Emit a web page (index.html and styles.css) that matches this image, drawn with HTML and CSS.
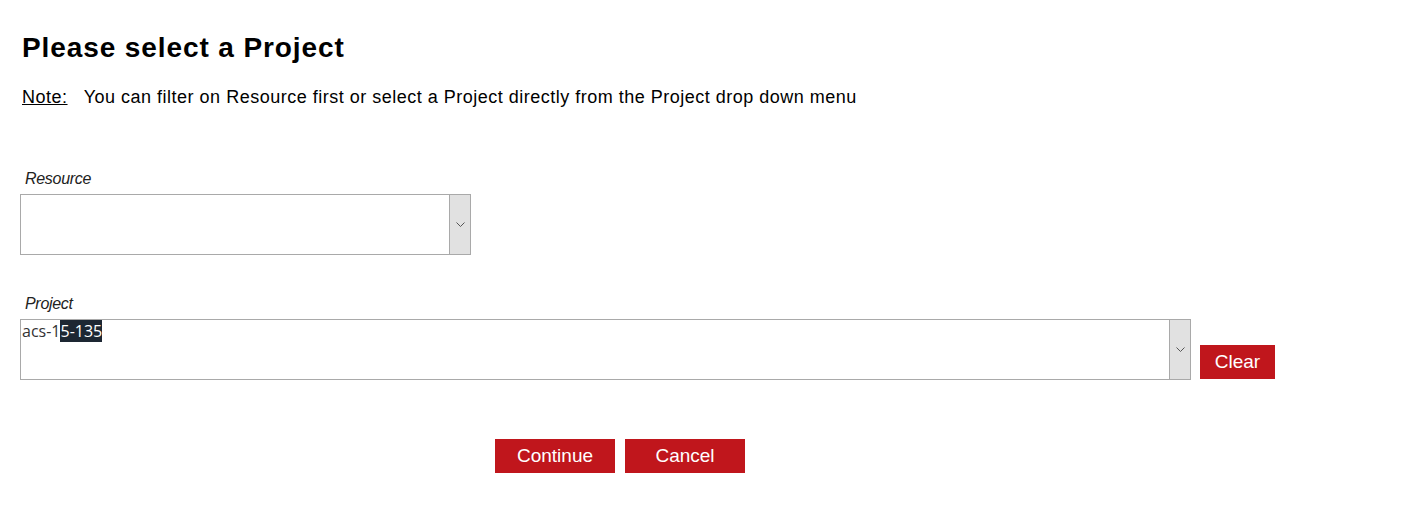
FILE: index.html
```html
<!DOCTYPE html>
<html lang="en">
<head>
    <meta charset="UTF-8">
    <title>Please select a Project</title>
    <link rel="stylesheet" href="styles.css">
</head>
<body>

<div class="page">
    <h1>Please select a Project</h1>
    <p class="note"><u>Note:</u>&nbsp;&nbsp; You can filter on Resource first or select a Project directly from the Project drop down menu</p>

    <div class="field">
        <label>Resource</label>
        <div class="combo combo-small">
            <div class="combo-text"></div>
            <div class="combo-arrow">
                <svg width="9" height="5" viewBox="0 0 9 5"><path d="M0.5 0.5 L4.5 4.5 L8.5 0.5" fill="none" stroke="#555" stroke-width="1"/></svg>
            </div>
        </div>
    </div>

    <div class="field">
        <label>Project</label>
        <div class="row">
            <div class="combo combo-wide">
                <div class="combo-text">acs-1<span class="sel">5-135</span></div>
                <div class="combo-arrow">
                    <svg width="9" height="5" viewBox="0 0 9 5"><path d="M0.5 0.5 L4.5 4.5 L8.5 0.5" fill="none" stroke="#555" stroke-width="1"/></svg>
                </div>
            </div>
            <button class="btn btn-clear">Clear</button>
        </div>
    </div>

    <div class="actions">
        <button class="btn">Continue</button>
        <button class="btn">Cancel</button>
    </div>
</div>

</body>
</html>
```

FILE: styles.css
```css
body {
    font-family: "Liberation Sans", Arial, sans-serif;
    background: #fff;
    color: #000;
    margin: 0;
}
.page {
    padding: 32px 20px 0 20px;
}
h1 {
    font-size: 28px;
    font-weight: bold;
    letter-spacing: 0.9px;
    margin: 0 0 0 2px;
    line-height: 32px;
}
.note {
    font-size: 18px;
    letter-spacing: 0.5px;
    margin: 22px 0 0 2px;
    line-height: 22px;
}
.field {
    margin-top: 62px;
}
.field + .field {
    margin-top: 40px;
}
.field label {
    display: block;
    font-size: 16px;
    font-style: italic;
    color: #222;
    margin-left: 5px;
    line-height: 18px;
    letter-spacing: -0.3px;
}
.combo {
    display: flex;
    height: 61px;
    border: 1px solid #a9a9a9;
    box-sizing: border-box;
    margin-top: 6px;
}
.combo-small {
    width: 451px;
}
.combo-wide {
    width: 1171px;
}
.combo-text {
    flex: 1;
    font-family: "Open Sans", "DejaVu Sans", sans-serif;
    font-size: 16px;
    color: #333;
    padding: 1px 0 0 1px;
    line-height: 20px;
}
.sel {
    background: #1d2733;
    color: #fff;
}
.combo-arrow {
    width: 20px;
    background: #e1e1e1;
    border-left: 1px solid #a9a9a9;
    display: flex;
    align-items: center;
    justify-content: center;
}
.row {
    display: flex;
    align-items: flex-end;
}
.btn {
    font-family: "Liberation Sans", Arial, sans-serif;
    font-size: 19px;
    background: #c0161c;
    color: #fff;
    border: none;
    height: 34px;
    width: 120px;
    padding: 0;
    cursor: pointer;
}
.btn-clear {
    width: 75px;
    margin-left: 9px;
    margin-bottom: 1px;
}
.actions {
    display: flex;
    gap: 10px;
    margin: 59px 0 0 475px;
}
```
